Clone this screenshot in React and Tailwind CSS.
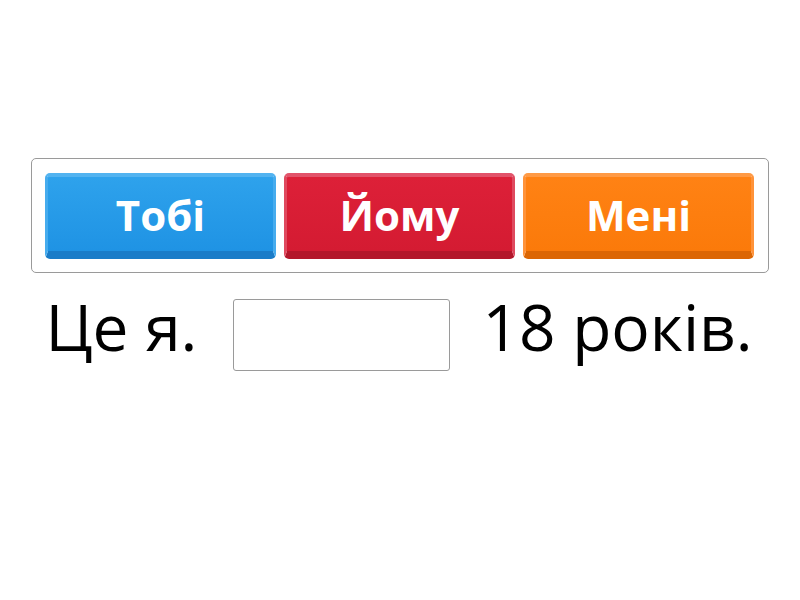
const options = [
  {
    label: "Тобі",
    face: "bg-[linear-gradient(#2ea2ec,#1f93e4)]",
    edge: "border-t-[#52b3f0] border-x-[#46acee] border-b-[#1a7cc8]",
  },
  {
    label: "Йому",
    face: "bg-[linear-gradient(#dd2038,#d41b32)]",
    edge: "border-t-[#e2536a] border-x-[#df4a5f] border-b-[#b3172b]",
  },
  {
    label: "Мені",
    face: "bg-[linear-gradient(#ff8214,#fb7a0a)]",
    edge: "border-t-[#ff9a45] border-x-[#ff933a] border-b-[#dc6603]",
  },
];

const App = () => {
  return (
    <div
      className="w-[800px] h-[600px] bg-white"
      style={{ fontFamily: '"Open Sans", "Noto Sans", sans-serif' }}
    >
      <div className="pt-[158px] px-[31px]">
        {/* Answer tiles */}
        <div className="border border-[#9a9a9a] rounded-[5px] pt-[14px] pb-[13px] px-[13px] flex gap-[8px]">
          {options.map((o) => (
            <button
              key={o.label}
              className={`w-[231px] h-[86px] rounded-[5px] border-t-[4px] border-x-[3px] border-b-[8px] ${o.face} ${o.edge} text-white font-bold text-[42px] leading-none flex items-center justify-center pt-[2px]`}
            >
              {o.label}
            </button>
          ))}
        </div>

        {/* Sentence */}
        <div className="flex items-center justify-center mt-[10px] text-black text-[64px] leading-none pr-[2px]">
          <span>Це я.</span>
          <div className="w-[217px] h-[72px] border border-[#9a9a9a] rounded-[3px] ml-[36px] mr-[32px] mt-[16px]" />
          <span>18 років.</span>
        </div>
      </div>
    </div>
  );
};

export default App;
